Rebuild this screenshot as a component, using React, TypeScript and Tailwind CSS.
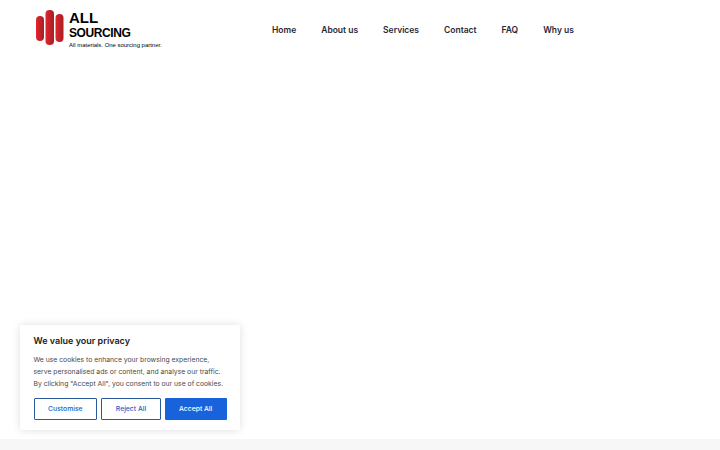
export default function App() {
  const nav = ["Home", "About us", "Services", "Contact", "FAQ", "Why us"];
  return (
    <div className="relative flex h-[450px] w-[720px] flex-col overflow-hidden bg-white font-['Inter',sans-serif]">
      <header className="flex h-[60px] items-center pl-[36px]">
        <div className="flex w-[236px] items-center gap-[5px]">
          <svg width="28" height="36" viewBox="0 0 28 36" className="mb-[4px]">
            <defs>
              <linearGradient id="g" x1="0" x2="1" y1="0" y2="0">
                <stop offset="0" stopColor="#e0262d" />
                <stop offset="1" stopColor="#a91d24" />
              </linearGradient>
            </defs>
            <rect x="0" y="6" width="8" height="25" rx="4" fill="url(#g)" />
            <rect x="9.5" y="0" width="8.5" height="35" rx="4" fill="url(#g)" />
            <rect x="19.5" y="4" width="8" height="28" rx="4" fill="url(#g)" />
          </svg>
          <div className="mb-[1px] flex flex-col font-['Liberation_Sans',sans-serif] text-black">
            <span className="text-[15px] font-bold leading-[14px]">ALL</span>
            <span className="mt-[2px] text-[12px] font-bold leading-[13px] tracking-[-0.4px]">SOURCING</span>
            <span className="mt-[1px] text-[5.95px] leading-[8px] text-black">All materials. One sourcing partner.</span>
          </div>
        </div>
        <nav className="flex items-center gap-[25px] text-[8.5px] font-semibold text-[#1f2937]">
          {nav.map((n) => (
            <span key={n}>{n}</span>
          ))}
        </nav>
      </header>
      <main className="flex-1" />
      <footer className="h-[11px] bg-[#f7f7f8]" />
      <section className="absolute bottom-[20px] left-[20px] w-[220px] rounded-[2px] bg-white px-[13.5px] pb-[10px] pt-[10px] shadow-[0_0_8px_rgba(0,0,0,0.13)]">
        <h2 className="text-[9px] font-semibold leading-[12px] text-[#212121]">We value your privacy</h2>
        <p className="mt-[7px] whitespace-nowrap text-[6.8px] leading-[12px] text-[#4a4a4a]">
          We use cookies to enhance your browsing experience,<br />
          serve personalised ads or content, and analyse our traffic.<br />
          By clicking "Accept All", you consent to our use of cookies.
        </p>
        <div className="mt-[8px] flex gap-[4px] text-[6.8px] font-medium">
          <button className="h-[22px] w-[64px] rounded-[1px] border-[1.5px] border-[#2a5a9c] bg-white text-[#1a5fc4]">Customise</button>
          <button className="h-[22px] w-[60px] rounded-[1px] border-[1.5px] border-[#2a5a9c] bg-white text-[#1a5fc4]">Reject All</button>
          <button className="h-[22px] w-[62px] rounded-[1px] bg-[#1863dc] text-white">Accept All</button>
        </div>
      </section>
    </div>
  );
}
